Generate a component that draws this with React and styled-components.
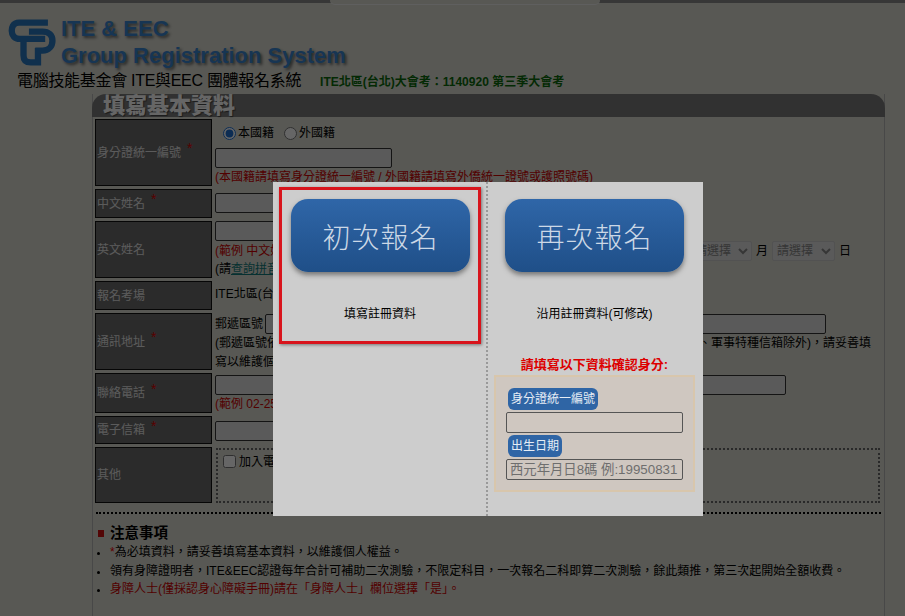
import React from 'react';
import styled, { createGlobalStyle } from 'styled-components';

const Global = createGlobalStyle`
    html, body { margin: 0; height: 100%; overflow: hidden; }
    body {
        background: #dcdcd2;
        color: #000;
        font: 12px/1.5 "Liberation Sans", "Noto Sans CJK TC", sans-serif;
    }
`;

const Page = styled.div`
    height: 616px;
    overflow: hidden;
    border-top: 3px solid #8a8a8a;
    box-sizing: border-box;
`;

const TopTab = styled.div`
    position: absolute;
    left: 330px;
    top: 0;
    width: 270px;
    height: 5px;
    box-sizing: border-box;
    border-bottom: 1px solid #eee;
    border-radius: 0 0 6px 6px;
    background: #dcdcd2;
`;

const Header = styled.header`
    height: 91px;
    padding: 16px 0 0 8px;
    box-sizing: border-box;
`;

const Brand = styled.div`
    display: flex;
    align-items: flex-start;
    gap: 3px;
    height: 52px;
`;

const BrandText = styled.div`
    margin-top: -4px;
    font: bold 22px/27px "Liberation Sans", sans-serif;
    color: #3a86d0;
    text-shadow: 2px 2px 3px #666;
`;

const Subtitle = styled.div`
    display: flex;
    align-items: baseline;
    gap: 19px;
    margin: 0 0 0 9px;
    font-size: 16px;
    line-height: 20px;
    letter-spacing: -0.3px;
    white-space: nowrap;
    strong { font-size: 12px; letter-spacing: 0; color: #0a6a0a; }
`;

const Panel = styled.section`
    margin: 0 20px 0 92px;
    height: 530px;
    border: solid #b4b4b4;
    border-width: 0 1px;
`;

const PanelTitle = styled.h2`
    margin: 0 -1px;
    height: 23px;
    padding-left: 11px;
    border-radius: 14px 14px 0 0;
    background: #7c7c7c;
    color: #fff;
    font-size: 22px;
    line-height: 23px;
    font-weight: 900;
    text-shadow: 1px 1px 1px #444;
`;

const Form = styled.div`
    display: grid;
    grid-template-columns: 117px 1fr;
    column-gap: 3px;
    row-gap: 3px;
    padding: 2px 4px 0 2px;
`;

const Label = styled.div`
    height: ${p => p.$h}px;
    box-sizing: border-box;
    display: flex;
    align-items: center;
    padding-left: 1px;
    border: 1px solid #111;
    background: #6c6c6c;
    color: #e4e4e4;
    font-size: 12px;
    i { color: #d00; font-style: normal; margin: -8px 0 0 6px; font-size: 14px; }
`;

const Value = styled.div`
    min-width: 0;
    height: ${p => p.$h}px;
    overflow: hidden;
    white-space: nowrap;
`;

const Line = styled.div`
    display: flex;
    align-items: center;
    gap: ${p => p.$gap ?? 2}px;
    height: ${p => p.$h || 20}px;
`;

const Radio = styled.input.attrs({ type: 'radio', readOnly: true })`
    margin: 0 0 0 8px;
    width: 13px;
    height: 13px;
    accent-color: #1f6fd0;
`;

const TextBox = styled.input.attrs({ type: 'text', readOnly: true })`
    display: block;
    box-sizing: border-box;
    width: ${p => p.$w}px;
    height: 20px;
    margin: ${p => p.$m || '0'};
    padding: 0 4px;
    flex: none;
    border: 1px solid #333;
    border-radius: 2px;
    background: #e0e0e0;
`;

const Hint = styled.span`
    color: #c00;
`;

const Teal = styled.a`
    color: #107a7a;
    text-decoration: underline;
`;

const Picker = styled.select`
    height: 20px;
    width: ${p => p.$w}px;
    font: 12px "Liberation Sans", "Noto Sans CJK TC", sans-serif;
    color: #888;
    background: #e0e0e0;
    border: 1px solid #ccc;
    border-radius: 2px;
`;

const DatePart = styled.div`
    display: flex;
    align-items: center;
    gap: 4px;
    margin-left: auto;
    margin-right: 29px;
`;

const DottedBox = styled.div`
    height: 55px;
    box-sizing: border-box;
    margin: 1px 0 0 1px;
    padding: 3px 5px;
    border: 2px dotted #666;
    display: flex;
    align-items: flex-start;
    gap: 3px;
    input { margin: 2px 0 0 0; width: 13px; height: 13px; }
`;

const AddressNote = styled.div`
    line-height: 19px;
`;

const Divider = styled.div`
    margin: 9px 3px 0 3px;
    border-top: 2px dotted #000;
`;

const Notice = styled.div`
    margin: 9px 0 0 4px;
`;

const NoticeTitle = styled.h3`
    display: flex;
    align-items: center;
    gap: 6px;
    margin: 0 0 0 1px;
    font-size: 14.5px;
    line-height: 20px;
    &::before {
        content: '';
        width: 6px;
        height: 7px;
        background: #d01010;
    }
`;

const NoticeList = styled.ul`
    margin: 0;
    padding: 0 0 0 13px;
    li { height: 18.5px; line-height: 18px; white-space: nowrap; }
    li::marker { font-size: 11px; color: #000; }
`;

const RedItem = styled.li`
    color: #c00;
`;

const Star = styled.span`
    color: #e00;
`;

const Overlay = styled.div`
    position: fixed;
    inset: 0;
    background: rgba(0, 0, 0, 0.6);
`;

const Modal = styled.div`
    position: absolute;
    left: 273px;
    top: 182px;
    width: 430px;
    height: 334px;
    display: grid;
    grid-template-columns: 213px 217px;
    background: #cdcdcd;
`;

const Col = styled.div`
    box-sizing: border-box;
    padding: ${p => (p.$right ? '5px 8px 0 6px' : '5px 5px 0 6px')};
    border-left: ${p => (p.$right ? '2px dotted #999' : 'none')};
`;

const Choice = styled.div`
    height: 157px;
    box-sizing: border-box;
    padding: ${p => (p.$active ? '9px 9px 0' : '12px 11px 0')};
    border: ${p => (p.$active ? '3px solid #d8141c' : 'none')};
    box-shadow: ${p => (p.$active ? '1px 1px 3px #777' : 'none')};
    text-align: center;
`;

const BigButton = styled.button`
    display: block;
    box-sizing: border-box;
    width: 179px;
    height: 73px;
    padding: 0;
    border: 0;
    border-radius: 17px;
    background: linear-gradient(#2f66a8, #1f4f88);
    box-shadow: 0 3px 5px #777;
    color: #ccd8e6;
    font: 300 28px/66px "Noto Sans CJK TC", sans-serif;
    letter-spacing: 1px;
`;

const ChoiceNote = styled.p`
    margin: 33px 0 0;
    font-size: 12px;
    line-height: 18px;
`;

const Prompt = styled.div`
    margin-top: 12px;
    color: #d00;
    font-weight: bold;
    font-size: 13px;
    line-height: 18px;
    text-align: center;
`;

const VerifyBox = styled.div`
    box-sizing: border-box;
    height: 117px;
    margin-top: 1px;
    padding: 11px 10px 0;
    border: 2px solid #d8c6ac;
    background: #cfc7c0;
`;

const Tag = styled.span`
    display: block;
    width: fit-content;
    box-sizing: border-box;
    height: 22px;
    margin-left: 2px;
    padding: 0 3px;
    border-radius: 6px;
    background: #2f65a5;
    color: #e6edf5;
    font-size: 12px;
    line-height: 22px;
`;

const VerifyInput = styled.input.attrs({ type: 'text', readOnly: true })`
    display: block;
    box-sizing: border-box;
    width: 177px;
    height: 21px;
    margin: 2px 0;
    padding: 0 3px;
    border: 1px solid #555;
    border-radius: 2px;
    background: transparent;
    font: 13.33px "Liberation Sans", "Noto Sans CJK TC", sans-serif;
    &::placeholder { color: #6e6e6e; opacity: 1; }
`;

function Logo() {
    return (
        <svg width="50" height="47" viewBox="0 0 55 52" fill="none" stroke="#2878c0" strokeWidth="7">
            <path d="M44 4H12C5 4 4 10 4 13c0 5 3 9 9 9h28" />
            <path d="M23 14h15c7 0 11 4 11 10s-4 11-11 11H30" />
            <path d="M17 22v18c0 6 3 8 8 8h8V32" />
        </svg>
    );
}

function App() {
    return (
        <>
            <Global />
            <TopTab />
            <Page>
                <Header>
                    <Brand>
                        <Logo />
                        <BrandText>
                            ITE &amp; EEC
                            <br />
                            Group Registration System
                        </BrandText>
                    </Brand>
                    <Subtitle>
                        電腦技能基金會 ITE與EEC 團體報名系統
                        <strong>ITE北區(台北)大會考：1140920 第三季大會考</strong>
                    </Subtitle>
                </Header>

                <Panel>
                    <PanelTitle>填寫基本資料</PanelTitle>
                    <Form>
                        <Label $h={67}>身分證統一編號<i>*</i></Label>
                        <Value $h={67}>
                            <Line $h={28}>
                                <Radio name="nat" defaultChecked />本國籍
                                <Radio name="nat" />外國籍
                            </Line>
                            <TextBox $w={177} $m="1px 0 0 0" />
                            <Hint>(本國籍請填寫身分證統一編號 / 外國籍請填寫外僑統一證號或護照號碼)</Hint>
                        </Value>

                        <Label $h={29}>中文姓名<i>*</i></Label>
                        <Value $h={29}><TextBox $w={177} $m="4px 0 0 0" /></Value>

                        <Label $h={57}>英文姓名</Label>
                        <Value $h={57}>
                            <TextBox $w={177} />
                            <Line $h={19} $gap={4}>
                                <Hint>(範例 中文姓名：王大明</Hint>
                                <DatePart>
                                    <Picker $w={62}><option>請選擇</option></Picker>月
                                    <Picker $w={63}><option>請選擇</option></Picker>日
                                </DatePart>
                            </Line>
                            <Line $h={18}><span>(請<Teal>查詢拼音</Teal>)</span></Line>
                        </Value>

                        <Label $h={29}>報名考場</Label>
                        <Value $h={29}><Line $h={26}>ITE北區(台北)</Line></Value>

                        <Label $h={57}>通訊地址<i>*</i></Label>
                        <Value $h={57}>
                            <Line $h={21}>郵遞區號<TextBox $w={561} /></Line>
                            <AddressNote>
                                (郵遞區號依照中華郵政最新規定填寫，地址請填寫可確實收件之地址，郵政信箱、郵局招領、軍事特種信箱除外)，請妥善填
                                <br />
                                寫以維護個人權益
                            </AddressNote>
                        </Value>

                        <Label $h={40}>聯絡電話<i>*</i></Label>
                        <Value $h={40}>
                            <TextBox $w={571} $m="2px 0 0 0" />
                            <Hint>(範例 02-25778806)</Hint>
                        </Value>

                        <Label $h={28}>電子信箱<i>*</i></Label>
                        <Value $h={28}><TextBox $w={177} $m="5px 0 0 0" /></Value>

                        <Label $h={56}>其他</Label>
                        <Value $h={56}>
                            <DottedBox>
                                <input type="checkbox" readOnly />加入電子報
                            </DottedBox>
                        </Value>
                    </Form>

                    <Divider />

                    <Notice>
                        <NoticeTitle>注意事項</NoticeTitle>
                        <NoticeList>
                            <li><Star>*</Star>為必填資料，請妥善填寫基本資料，以維護個人權益。</li>
                            <li>領有身障證明者，ITE&amp;EEC認證每年合計可補助二次測驗，不限定科目，一次報名二科即算二次測驗，餘此類推，第三次起開始全額收費。</li>
                            <RedItem>身障人士(僅採認身心障礙手冊)請在「身障人士」欄位選擇「是」。</RedItem>
                        </NoticeList>
                    </Notice>
                </Panel>
            </Page>

            <Overlay />
            <Modal>
                <Col>
                    <Choice $active>
                        <BigButton>初次報名</BigButton>
                        <ChoiceNote>填寫註冊資料</ChoiceNote>
                    </Choice>
                </Col>
                <Col $right>
                    <Choice>
                        <BigButton>再次報名</BigButton>
                        <ChoiceNote>沿用註冊資料(可修改)</ChoiceNote>
                    </Choice>
                    <Prompt>請填寫以下資料確認身分:</Prompt>
                    <VerifyBox>
                        <Tag>身分證統一編號</Tag>
                        <VerifyInput />
                        <Tag>出生日期</Tag>
                        <VerifyInput placeholder="西元年月日8碼 例:19950831" />
                    </VerifyBox>
                </Col>
            </Modal>
        </>
    );
}

export default App;
